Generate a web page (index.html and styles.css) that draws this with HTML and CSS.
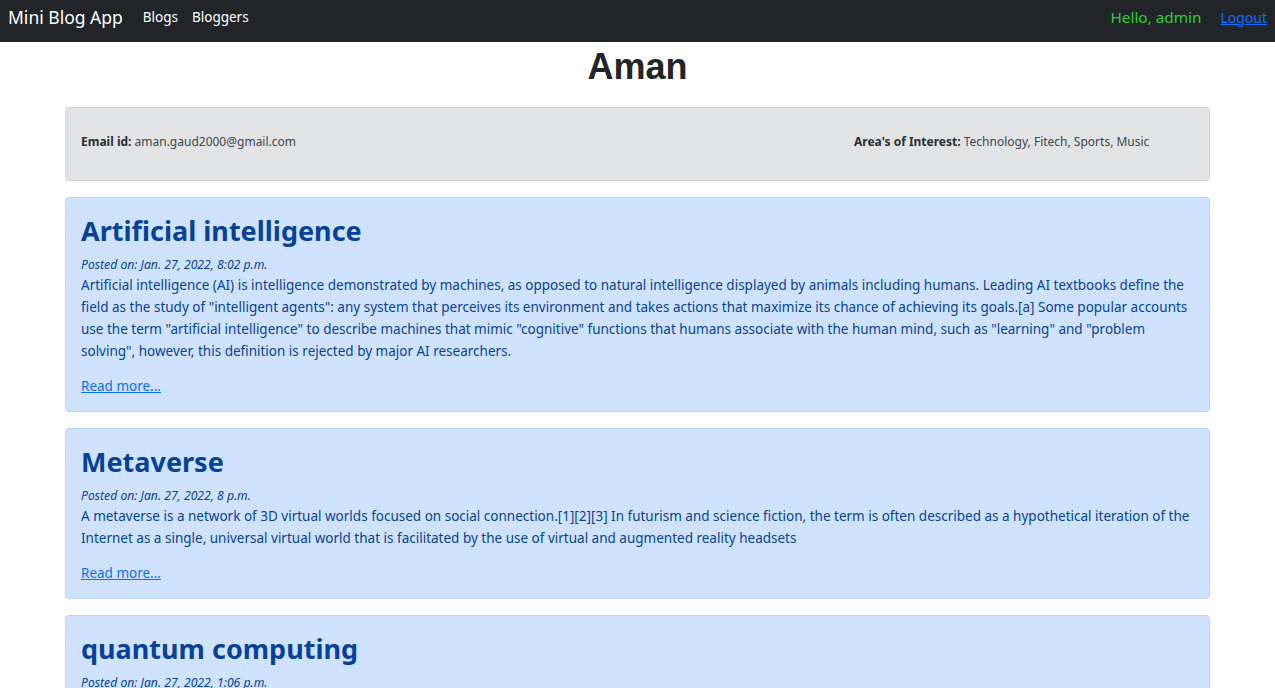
FILE: index.html
```html
<!DOCTYPE html>
<html>
<head>
<meta charset="utf-8">
<title>Mini Blog App</title>
<link rel="stylesheet" href="styles.css">
</head>
<body>
<nav class="navbar">
  <div class="nav-left">
    <a class="brand" href="#">Mini Blog App</a>
    <a class="nav-link" href="#">Blogs</a>
    <a class="nav-link" href="#">Bloggers</a>
  </div>
  <div class="nav-right">
    <span class="hello">Hello, admin</span>
    <a class="logout" href="#">Logout</a>
  </div>
</nav>
<main class="container">
  <h1 class="name">Aman</h1>
  <section class="alert alert-secondary info">
    <div class="info-item"><b>Email id:</b> aman.gaud2000@gmail.com</div>
    <div class="info-item"><b>Area's of Interest:</b> Technology, Fitech, Sports, Music</div>
  </section>
  <article class="alert alert-primary post">
    <h2 class="post-title">Artificial intelligence</h2>
    <p class="posted">Posted on: Jan. 27, 2022, 8:02 p.m.</p>
    <p class="post-body">Artificial intelligence (AI) is intelligence demonstrated by machines, as opposed to natural intelligence displayed by animals including humans. Leading AI textbooks define the field as the study of "intelligent agents": any system that perceives its environment and takes actions that maximize its chance of achieving its goals.[a] Some popular accounts use the term "artificial intelligence" to describe machines that mimic "cognitive" functions that humans associate with the human mind, such as "learning" and "problem solving", however, this definition is rejected by major AI researchers.</p>
    <a class="read-more" href="#">Read more...</a>
  </article>
  <article class="alert alert-primary post">
    <h2 class="post-title">Metaverse</h2>
    <p class="posted">Posted on: Jan. 27, 2022, 8 p.m.</p>
    <p class="post-body">A metaverse is a network of 3D virtual worlds focused on social connection.[1][2][3] In futurism and science fiction, the term is often described as a hypothetical iteration of the Internet as a single, universal virtual world that is facilitated by the use of virtual and augmented reality headsets</p>
    <a class="read-more" href="#">Read more...</a>
  </article>
  <article class="alert alert-primary post">
    <h2 class="post-title">quantum computing</h2>
    <p class="posted">Posted on: Jan. 27, 2022, 1:06 p.m.</p>
    <p class="post-body">Quantum computing is a type of computation that harnesses the collective properties of quantum states, such as superposition, interference, and entanglement, to perform calculations.</p>
    <a class="read-more" href="#">Read more...</a>
  </article>
</main>
</body>
</html>
```
FILE: styles.css
```css
* { box-sizing: border-box; }
html, body { margin: 0; padding: 0; }
body {
  font-family: "Noto Sans", "Open Sans", sans-serif;
  color: #212529;
  background: #fff;
}
.navbar {
  height: 42px;
  background: #212529;
  display: flex;
  align-items: center;
  justify-content: space-between;
  padding: 0 8px 8px;
}
.nav-left, .nav-right { display: flex; align-items: center; }
.brand {
  color: #fff;
  text-decoration: none;
  font-size: 17.5px;
  margin-right: 20px;
}
.nav-link {
  color: #fff;
  text-decoration: none;
  font-size: 13.5px;
  margin-right: 14px;
}
.hello {
  color: #32cd32;
  font-size: 15.3px;
  margin-right: 19px;
}
.logout {
  color: #0d6efd;
  font-size: 14px;
  margin-right: 0;
}
.container {
  width: 1145px;
  margin: 0 auto;
}
.name {
  font-family: "Liberation Sans", Arial, sans-serif;
  font-weight: bold;
  font-size: 36px;
  text-align: center;
  margin: 5px 0 20px;
  line-height: 40px;
}
.alert {
  border: 1px solid transparent;
  border-radius: 4px;
  margin-bottom: 16px;
}
.alert-secondary {
  background: #e2e3e5;
  border-color: #d3d6d8;
  color: #41464b;
}
.alert-primary {
  background: #cfe2ff;
  border-color: #b6d4fe;
  color: #084298;
}
.info {
  display: grid;
  grid-template-columns: 773px 1fr;
  padding: 23px 15px 27px;
  font-size: 12px;
  line-height: 20px;
  min-height: 74px;
  align-items: center;
}
.info b { color: #2b2f33; }
.post {
  padding: 12px 15px 15px;
}
.post-title {
  margin: 0;
  font-size: 27px;
  font-weight: bold;
  line-height: 42px;
}
.posted {
  margin: 5px 0 0;
  font-style: italic;
  font-size: 12.2px;
  line-height: 16px;
}
.post-body {
  margin: 1px 0 12px;
  font-size: 13.5px;
  line-height: 22px;
}
.read-more {
  color: #0d6efd;
  font-size: 13.5px;
  line-height: 20px;
}
```
